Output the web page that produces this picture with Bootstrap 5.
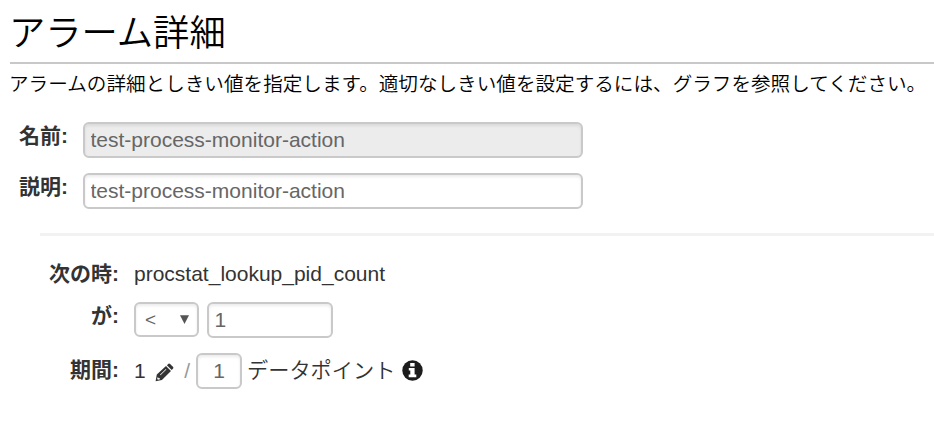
<!DOCTYPE html>
<html lang="ja">
<head>
<meta charset="utf-8">
<meta name="viewport" content="width=device-width, initial-scale=1">
<title>アラーム詳細</title>
<link href="https://cdn.jsdelivr.net/npm/bootstrap@5.3.0/dist/css/bootstrap.min.css" rel="stylesheet">
<style>
body{font-family:"Liberation Sans","Noto Sans CJK JP",sans-serif;font-size:21px;line-height:30px;color:#333;background:#fff;overflow:hidden}
.page-title{font-size:36.3px;line-height:44px;font-weight:350;color:#000;padding:12px 0 0 9px;height:62px}
.title-rule{height:2px;margin-left:10px;background:#c8c8c8}
.intro{font-size:19.6px;font-weight:350;color:#000;padding:5px 0 0 9px;height:58px;white-space:nowrap}
.field-row{height:36px}
.row-gap{margin-top:15px}
.field-label{font-weight:700;text-align:right;white-space:nowrap;line-height:27px;flex:none}
.top-label{width:68px;margin-right:15px}
.sub-label{width:119px;margin-right:15px}
.metric-row .field-label{line-height:31px}
.period-row .field-label{line-height:34px}
.box{height:36px;border:2px solid #c9c9c9;border-radius:6px;padding:0 5.5px;font-size:21px;line-height:32px;color:#666;background:#fff;box-shadow:inset 0 2px 3px rgba(0,0,0,.08)}
.box:disabled{background:#ececec;color:#666;opacity:1}
.box-wide{width:500px}
.box-mid{width:126px}
.box-tiny{width:46px}
.op{width:65px;height:35px;margin-right:8px;padding:0 8px 0 9px;font-size:19px}
.op svg{width:9px;height:9px}
.section-rule{height:3px;margin:24px 0 0 40px;background:#f2f2f2}
.metric{line-height:32px}
.metric-row{margin-top:22px;height:44px}
.pencil{width:19px;height:19px;margin:2px 0 0 9px}
.slash{color:#999;margin:0 6px 0 10.5px}
.points{font-size:21.2px;font-weight:350;margin-left:5px;line-height:32px}
.info{width:21px;height:21px;margin:-2px 0 0 7px}
</style>
</head>
<body>
<h1 class="page-title mb-0">アラーム詳細</h1>
<div class="title-rule"></div>
<p class="intro mb-0">アラームの詳細としきい値を指定します。適切なしきい値を設定するには、グラフを参照してください。</p>
<form>
<div class="field-row d-flex"><label class="field-label top-label" for="name">名前:</label><input id="name" class="box box-wide" value="test-process-monitor-action" disabled></div>
<div class="field-row row-gap d-flex"><label class="field-label top-label" for="desc">説明:</label><input id="desc" class="box box-wide" value="test-process-monitor-action"></div>
<div class="section-rule"></div>
<div class="metric-row d-flex"><span class="field-label sub-label">次の時:</span><span class="metric">procstat_lookup_pid_count</span></div>
<div class="field-row d-flex"><label class="field-label sub-label" for="threshold">が:</label>
<button type="button" class="box op d-flex align-items-center justify-content-between" aria-label="比較"><span>&lt;</span><svg viewBox="0 0 10 10"><path d="M0 .2h10L5 10z" fill="#555"/></svg></button><input id="threshold" class="box box-mid" value="1"></div>
<div class="field-row row-gap period-row d-flex"><label class="field-label sub-label" for="count">期間:</label>
<div class="d-flex align-items-center"><span>1</span>
<svg class="pencil" viewBox="0 0 19 19" fill="#333"><path fill-rule="evenodd" d="M.6 18.2l1.2-6.6L11 3l5 5-9.1 9zM2.7 14l-.5 2 .8.8 2-.5-.1-1-1.1-.1zM5 11.7l.5.5 5.9-5.6-.5-.5z"/><path d="M11.9 2.2l1.6-1.4q.8-.6 1.6.1l3 3q.7.8 0 1.6l-1.4 1.6z"/></svg>
<span class="slash">/</span><input id="count" class="box box-tiny text-center" value="1"><span class="points">データポイント</span>
<svg class="info" viewBox="0 0 21 21"><circle cx="10.5" cy="10.5" r="10.2" fill="#1c1c1c"/><path d="M8.2 3.1h4.4v3.5H8.2zM6.8 8h5.8v6.5h1.7v2.8H6.7v-2.8h1.6v-3.9H6.8z" fill="#fff"/></svg></div></div>
</form>
<script src="https://cdn.jsdelivr.net/npm/bootstrap@5.3.0/dist/js/bootstrap.bundle.min.js"></script>
</body>
</html>
